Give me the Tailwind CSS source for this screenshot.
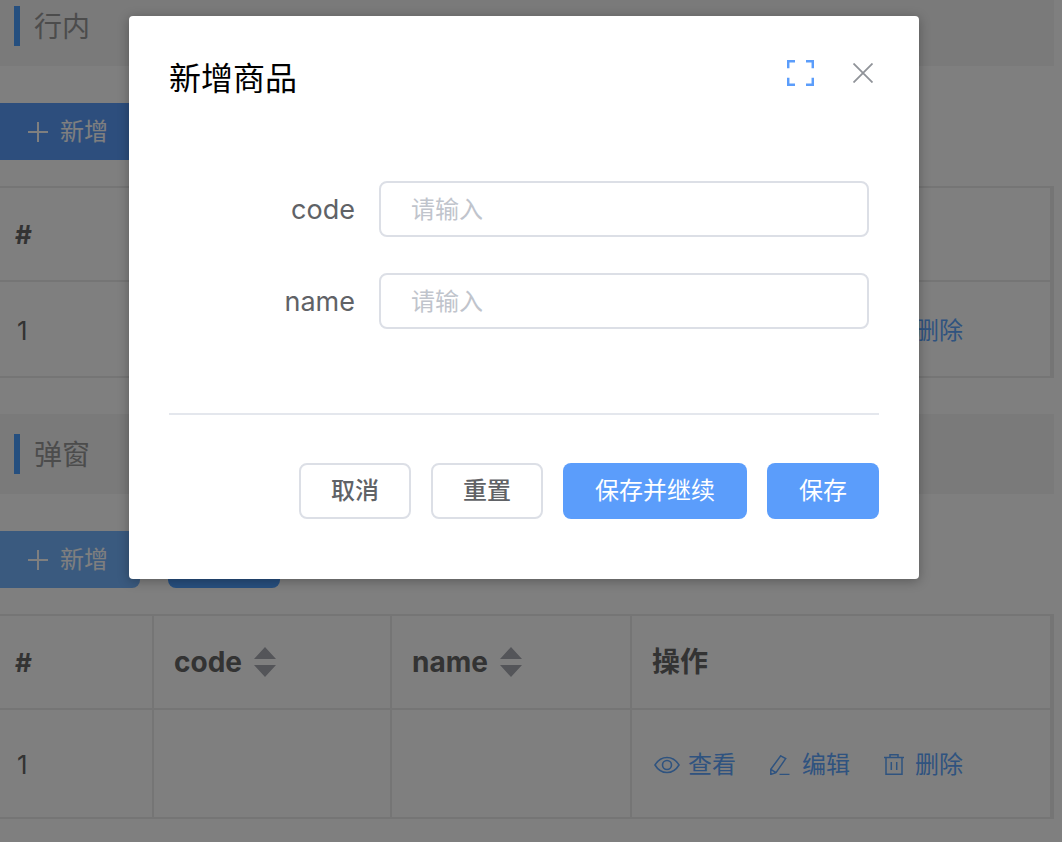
<!DOCTYPE html>
<html lang="zh">
<head>
    <meta charset="UTF-8">
    <title>新增商品</title>
    <script src="https://cdn.jsdelivr.net/npm/@tailwindcss/browser@4"></script>
</head>
<body class="bg-white font-['Inter','Noto_Sans_CJK_SC',sans-serif]">
<div class="relative h-[842px] overflow-hidden">

    <!-- page behind the dialog -->
    <div class="-mt-[14px] w-[1054px] text-[#666]">

        <!-- inline section -->
        <div class="h-[80px] bg-[#f4f4f5] pl-[14px] flex items-center">
            <span class="w-[6px] h-[40px] bg-[#4a9fff]"></span>
            <span class="ml-[14px] pt-[2px] text-[28px] text-[#999]">行内</span>
        </div>
        <div class="mt-[37px] h-[57px] flex">
            <button class="w-[140px] rounded-r-[8px] bg-[#5b9dfb] flex items-center pl-[28px] text-white text-[24px]">
                <svg class="w-[20px] h-[20px]" viewBox="0 0 20 20" fill="none" stroke="currentColor" stroke-width="2"><path d="M10 0v20M0 10h20"/></svg>
                <span class="ml-[12px]">新增</span>
            </button>
        </div>
        <div class="mt-[26px] border-2 border-l-0 border-r-4 border-[#ebebeb] grid grid-cols-[154px_238px_240px_1fr] grid-rows-[94px_94px]">
            <div class="border-r-2 border-b-2 border-[#ebebeb] pl-[15px] flex items-center text-[26px] font-bold">#</div>
            <div class="border-r-2 border-b-2 border-[#ebebeb]"></div>
            <div class="border-r-2 border-b-2 border-[#ebebeb]"></div>
            <div class="border-b-2 border-[#ebebeb]"></div>
            <div class="border-r-2 border-[#ebebeb] pl-[17px] pt-[2px] flex items-center text-[26px]">1</div>
            <div class="border-r-2 border-[#ebebeb]"></div>
            <div class="border-r-2 border-[#ebebeb]"></div>
            <div class="flex items-center pl-[283px] pt-[4px] text-[24px] text-[#5ea6ff]">删除</div>
        </div>

        <!-- dialog section -->
        <div class="mt-[36px] h-[80px] bg-[#f4f4f5] pl-[14px] flex items-center">
            <span class="w-[6px] h-[40px] bg-[#4a9fff]"></span>
            <span class="ml-[14px] pt-[2px] text-[28px] text-[#999]">弹窗</span>
        </div>
        <div class="mt-[37px] h-[57px] flex items-stretch gap-[28px]">
            <button class="w-[140px] rounded-r-[8px] bg-[#74b4ff] flex items-center pl-[28px] text-white text-[24px]">
                <svg class="w-[20px] h-[20px]" viewBox="0 0 20 20" fill="none" stroke="currentColor" stroke-width="2"><path d="M10 0v20M0 10h20"/></svg>
                <span class="ml-[12px]">新增</span>
            </button>
            <button class="w-[112px] rounded-[8px] bg-[#4e9fff]"></button>
        </div>
        <div class="mt-[26px] border-2 border-l-0 border-r-4 border-[#ebebeb] grid grid-cols-[154px_238px_240px_1fr] grid-rows-[94px_107px]">
            <div class="border-r-2 border-b-2 border-[#ebebeb] pl-[15px] flex items-center text-[26px] font-bold">#</div>
            <div class="border-r-2 border-b-2 border-[#ebebeb] pl-[20px] flex items-center text-[28px] font-bold">
                code
                <svg class="ml-[12px] w-[22px] h-[30px] text-[#a8aab2]" viewBox="0 0 22 30" fill="currentColor"><path d="M11 0l11 12H0zM11 30L0 18h22z"/></svg>
            </div>
            <div class="border-r-2 border-b-2 border-[#ebebeb] pl-[20px] flex items-center text-[28px] font-bold">
                name
                <svg class="ml-[12px] w-[22px] h-[30px] text-[#a8aab2]" viewBox="0 0 22 30" fill="currentColor"><path d="M11 0l11 12H0zM11 30L0 18h22z"/></svg>
            </div>
            <div class="border-b-2 border-[#ebebeb] pl-[20px] flex items-center text-[28px] font-bold">操作</div>
            <div class="border-r-2 border-[#ebebeb] pl-[17px] pt-[2px] flex items-center text-[26px]">1</div>
            <div class="border-r-2 border-[#ebebeb]"></div>
            <div class="border-r-2 border-[#ebebeb]"></div>
            <div class="flex items-center pl-[22px] pt-[2px] text-[24px] text-[#5ea6ff]">
                <svg class="w-[26px] h-[18px]" viewBox="0 0 26 18" fill="none" stroke="currentColor" stroke-width="1.6"><path d="M1 9c3-5 7-7.500 12-7.500S22 4 25 9c-3 5-7 7.500-12 7.500S4 14 1 9z"/><circle cx="13" cy="9" r="4.500"/></svg>
                <span class="ml-[8px]">查看</span>
                <svg class="ml-[34px] w-[20px] h-[20px]" viewBox="0 0 20 20" fill="none" stroke="currentColor" stroke-width="1.500"><path d="M10.700 0.800l5 2.800L6 17.700l-5.200 1.700v-5.100zM0.800 14.300L6 17.700M9.500 19.400h10"/></svg>
                <span class="ml-[12px]">编辑</span>
                <svg class="ml-[34px] w-[20px] h-[21px]" viewBox="0 0 20 21" fill="none" stroke="currentColor" stroke-width="1.500"><path d="M0 3.500h20M2 3.500v16.700h16V3.500M6 3.500V0.800h8v2.700M7.300 8v8M12.700 8v8"/></svg>
                <span class="ml-[11px]">删除</span>
            </div>
        </div>
    </div>

    <!-- overlay -->
    <div class="absolute inset-0 bg-black/50"></div>

    <!-- dialog -->
    <div class="absolute left-[129px] top-[16px] w-[790px] h-[563px] bg-white rounded-[4px] shadow-[0_2px_12px_rgba(0,0,0,0.3)] px-[40px]">
        <div class="flex items-center h-[128px] -mb-[1px]">
            <span class="mb-[2px] text-[32px] text-black">新增商品</span>
            <svg class="ml-auto mb-[14px] w-[27px] h-[26px] text-[#5b9dfb]" viewBox="0 0 27 26" fill="none" stroke="currentColor" stroke-width="2.5"><path d="M8 1.200H1.200v7M19 1.200h6.800v7M8 24.800H1.200v-7M19 24.800h6.800v-7"/></svg>
            <svg class="ml-[39px] mr-[6px] mb-[14px] w-[20px] h-[20px] text-[#909399]" viewBox="0 0 20 20" fill="none" stroke="currentColor" stroke-width="1.800"><path d="M0.500 0.500l19 19M19.500 0.500l-19 19"/></svg>
        </div>
        <div class="pt-[38px] h-[272px] border-b-2 border-[#e4e7ed] flex flex-col gap-[36px]">
            <div class="flex items-center">
                <label class="w-[186px] pt-[2px] text-right text-[27px] text-[#606266]">code</label>
                <div class="ml-[24px] w-[490px] h-[56px] border-2 border-[#dcdfe6] rounded-[8px] pl-[30px] pt-[2px] flex items-center text-[24px] text-[#c0c4cc]">请输入</div>
            </div>
            <div class="flex items-center">
                <label class="w-[186px] pt-[2px] text-right text-[27px] text-[#606266]">name</label>
                <div class="ml-[24px] w-[490px] h-[56px] border-2 border-[#dcdfe6] rounded-[8px] pl-[30px] pt-[2px] flex items-center text-[24px] text-[#c0c4cc]">请输入</div>
            </div>
        </div>
        <div class="mt-[48px] flex justify-end gap-[20px] text-[24px]">
            <button class="w-[112px] h-[56px] border-2 border-[#dcdfe6] rounded-[8px] text-[#606266] font-medium">取消</button>
            <button class="w-[112px] h-[56px] border-2 border-[#dcdfe6] rounded-[8px] text-[#606266] font-medium">重置</button>
            <button class="w-[184px] h-[56px] rounded-[8px] bg-[#5b9dfb] text-white">保存并继续</button>
            <button class="w-[112px] h-[56px] rounded-[8px] bg-[#5b9dfb] text-white">保存</button>
        </div>
    </div>
</div>
</body>
</html>
